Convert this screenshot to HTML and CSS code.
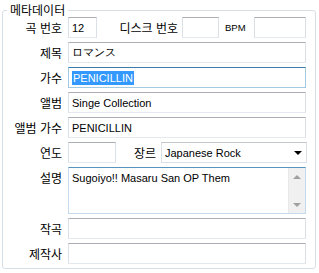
FILE: index.html
```html
<!DOCTYPE html>
<html lang="ko">
<head>
  <meta charset="UTF-8" />
  <meta name="viewport" content="width=device-width, initial-scale=1.0"/>
  <title>메타데이터</title>
  <link rel="stylesheet" href="styles.css">
</head>
<body>
  <fieldset class="meta">
    <legend>메타데이터</legend>

    <div class="row">
      <label class="lbl">곡 번호</label>
      <input class="txt w-track" type="text" value="12" />
      <span class="sub disc">디스크 번호</span>
      <input class="txt w-disc" type="text" />
      <span class="sub bpm">BPM</span>
      <input class="txt w-bpm" type="text" />
    </div>

    <div class="row">
      <label class="lbl">제목</label>
      <input class="txt grow" type="text" value="ロマンス" />
    </div>

    <div class="row">
      <label class="lbl">가수</label>
      <div class="txt grow focus"><span class="sel">PENICILLIN</span></div>
    </div>

    <div class="row">
      <label class="lbl">앨범</label>
      <input class="txt grow" type="text" value="Singe Collection" />
    </div>

    <div class="row">
      <label class="lbl">앨범 가수</label>
      <input class="txt grow" type="text" value="PENICILLIN" />
    </div>

    <div class="row">
      <label class="lbl">연도</label>
      <input class="txt w-year" type="text" />
      <span class="sub genre">장르</span>
      <div class="combo grow">
        <span>Japanese Rock</span>
        <span class="arrow"></span>
      </div>
    </div>

    <div class="row tall">
      <label class="lbl">설명</label>
      <div class="memo grow">
        <div class="memo-text">Sugoiyo!! Masaru San OP Them</div>
        <div class="vscroll">
          <span class="tri up"></span>
          <span class="tri down"></span>
        </div>
      </div>
    </div>

    <div class="row">
      <label class="lbl">작곡</label>
      <input class="txt grow" type="text" />
    </div>

    <div class="row">
      <label class="lbl">제작사</label>
      <input class="txt grow" type="text" />
    </div>
  </fieldset>
</body>
</html>
```

FILE: styles.css
```css
body {
  margin: 0;
  padding: 0;
  background: #fff;
  font-family: "Noto Sans CJK KR", "DejaVu Sans", sans-serif;
  font-size: 12px;
  color: #000;
}
.meta {
  box-sizing: border-box;
  width: 312px;
  margin: 3px 0 0 2px;
  padding: 0 9px 4px 0;
  border: 1px solid #d5dfe5;
  border-radius: 3px;
  display: flex;
  flex-direction: column;
  gap: 4px;
}
.meta legend {
  margin-left: 4px;
  padding: 0 3px 0 3px;
  line-height: 14px;
  font-size: 12px;
}
.row {
  display: flex;
  align-items: center;
  height: 21px;
}
.row.tall {
  height: 47px;
  align-items: flex-start;
}
.lbl {
  width: 59px;
  flex: none;
  text-align: right;
  margin-right: 6px;
  line-height: 21px;
  white-space: nowrap;
}
.txt {
  box-sizing: border-box;
  height: 21px;
  margin: 0;
  padding: 0 3px;
  border: 1px solid #dbdfe6;
  border-top-color: #abadb3;
  border-bottom-color: #e3e9ef;
  border-radius: 0;
  background: #fff;
  font-family: "Liberation Sans", Arial, sans-serif;
  font-size: 11px;
  color: #000;
  outline: none;
}
.grow {
  flex: 1;
  min-width: 0;
}
.w-track { width: 29px; }
.w-disc { width: 37px; }
.w-bpm { width: 52px; }
.w-year { width: 48px; }
.sub {
  flex: none;
  white-space: nowrap;
}
.disc {
  width: 85px;
  text-align: right;
  padding-right: 4px;
  box-sizing: border-box;
}
.bpm {
  width: 35px;
  padding-left: 6px;
  box-sizing: border-box;
  font-family: "Liberation Sans", Arial, sans-serif;
  font-size: 9.5px;
}
.genre {
  width: 45px;
  text-align: right;
  padding-right: 5px;
  box-sizing: border-box;
}
.focus {
  display: flex;
  align-items: center;
  border-color: #a4c9e3;
  border-top-color: #3d7bad;
  padding-left: 3px;
}
.sel {
  background: #3399ff;
  color: #fff;
  line-height: 14px;
  padding: 0 1px;
}
.combo {
  box-sizing: border-box;
  height: 21px;
  display: flex;
  align-items: center;
  justify-content: space-between;
  padding: 0 4px 0 3px;
  margin-right: -1px;
  border: 1px solid #dbdfe6;
  border-top-color: #c4c6cc;
  font-family: "Liberation Sans", Arial, sans-serif;
  font-size: 11px;
}
.arrow {
  width: 0;
  height: 0;
  border-left: 4px solid transparent;
  border-right: 4px solid transparent;
  border-top: 4px solid #000;
}
.memo {
  box-sizing: border-box;
  height: 47px;
  display: flex;
  border: 1px solid #c5daed;
  border-top-color: #5794bf;
}
.memo-text {
  flex: 1;
  padding: 3px 3px;
  font-family: "Liberation Sans", Arial, sans-serif;
  font-size: 11px;
  line-height: 14px;
}
.vscroll {
  width: 16px;
  background: #f0f0f0;
  border-left: 1px solid #e8e8e8;
  display: flex;
  flex-direction: column;
  justify-content: space-between;
  align-items: center;
  padding: 7px 0 6px;
}
.tri {
  width: 0;
  height: 0;
  border-left: 4px solid transparent;
  border-right: 4px solid transparent;
}
.tri.up { border-bottom: 4px solid #a0a0a0; }
.tri.down { border-top: 4px solid #a0a0a0; }
```
